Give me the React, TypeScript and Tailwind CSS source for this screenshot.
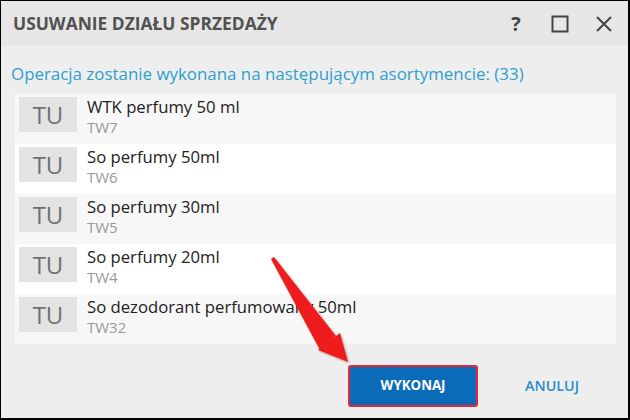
import React from "react";

const items = [
  { name: "WTK perfumy 50 ml", code: "TW7" },
  { name: "So perfumy 50ml", code: "TW6" },
  { name: "So perfumy 30ml", code: "TW5" },
  { name: "So perfumy 20ml", code: "TW4" },
  { name: "So dezodorant perfumowany 50ml", code: "TW32" },
];

export default function App() {
  return (
    <div
      className="relative w-[630px] h-[420px] bg-black pt-px pl-px pr-[2px] pb-[2px] overflow-hidden"
      style={{ fontFamily: '"Open Sans", "Noto Sans", sans-serif' }}
    >
      <div className="flex flex-col w-full h-full bg-[#eeeeee]">
        <div className="flex items-center h-[46px] bg-[#e6e6e6] border-b border-[#f2f2f2] pl-[12px] pr-[14px]">
          <div className="flex-1 text-[17.4px] font-bold text-[#525252]">
            USUWANIE DZIAŁU SPRZEDAŻY
          </div>
          <div className="flex items-center gap-[24px] text-[#444]">
            <span className="text-[20px] font-bold leading-none w-[20px] text-center">?</span>
            <svg width="20" height="20" viewBox="0 0 20 20">
              <rect x="2.5" y="2.5" width="15" height="15" fill="none" stroke="#444" strokeWidth="2" />
            </svg>
            <svg width="20" height="20" viewBox="0 0 20 20">
              <path d="M3 3 L17 17 M17 3 L3 17" stroke="#444" strokeWidth="2" />
            </svg>
          </div>
        </div>
        <div className="pl-[10px] pt-[16px] pb-[9px] text-[16.9px] leading-[22px] text-[#2ea0cc]">
          Operacja zostanie wykonana na następującym asortymencie: (33)
        </div>
        <div className="ml-[14px] mr-[12px] flex flex-col">
          {items.map((it, i) => (
            <div
              key={i}
              className={`flex h-[50px] pl-[4px] pt-[3px] ${i % 2 === 0 ? "bg-[#f7f7f7]" : "bg-white"}`}
            >
              <div className="w-[58px] h-[35px] bg-[#e3e3e3] flex items-center justify-center text-[24px] text-[#707070]">
                TU
              </div>
              <div className="ml-[10px] flex flex-col">
                <div className="text-[16.7px] leading-[20px] text-[#222]">{it.name}</div>
                <div className="text-[15px] leading-[21px] text-[#999]">{it.code}</div>
              </div>
            </div>
          ))}
        </div>
        <div className="flex items-center justify-end mt-[21px] pr-[49px] gap-[47px]">
          <div className="w-[130px] h-[42px] rounded-[3px] border-[2px] border-[#e8283a] bg-[#0a6cb8] flex items-center justify-center text-white font-bold text-[13.3px]">
            WYKONAJ
          </div>
          <div className="text-[#2a8dc6] text-[14.3px] font-semibold">ANULUJ</div>
        </div>
      </div>
      <svg className="absolute left-0 top-0" width="630" height="420" viewBox="0 0 630 420">
        <defs>
          <filter id="sh" x="-20%" y="-20%" width="140%" height="140%">
            <feDropShadow dx="1" dy="1" stdDeviation="1" floodColor="#000" floodOpacity="0.35" />
          </filter>
        </defs>
        <g filter="url(#sh)">
          <path d="M271 259 L274 257 L336 336 L320 350 Z" fill="#ee1c1c" />
          <path d="M348 362 L318 350 L340 333 Z" fill="#ee1c1c" />
        </g>
      </svg>
    </div>
  );
}
